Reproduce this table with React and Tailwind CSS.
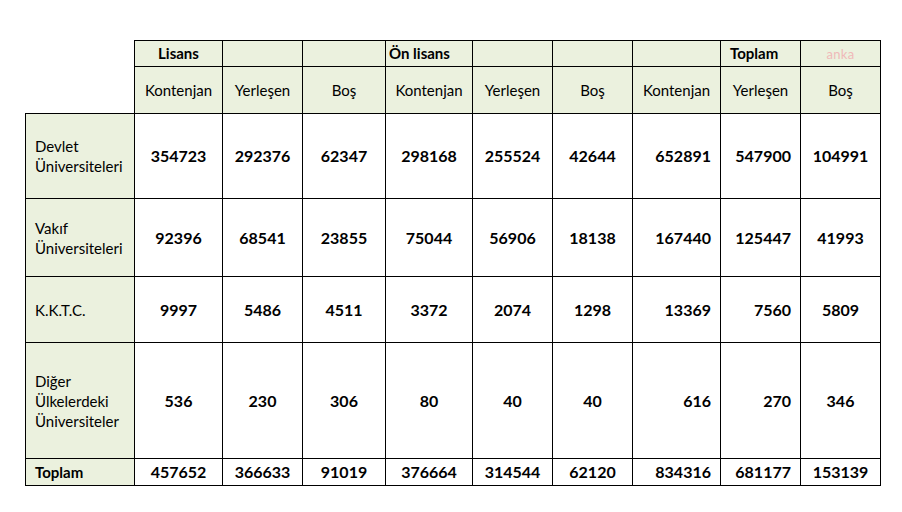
import React from 'react';

const cols = [109, 88, 80, 83, 87, 80, 80, 88, 80, 80];

const rows = [
  { label: ['Devlet', 'Üniversiteleri'], h: 'h-[85px]', values: [354723, 292376, 62347, 298168, 255524, 42644, 652891, 547900, 104991] },
  { label: ['Vakıf', 'Üniversiteleri'], h: 'h-[78px]', values: [92396, 68541, 23855, 75044, 56906, 18138, 167440, 125447, 41993] },
  { label: ['K.K.T.C.'], h: 'h-[66px]', values: [9997, 5486, 4511, 3372, 2074, 1298, 13369, 7560, 5809] },
  { label: ['Diğer', 'Ülkelerdeki', 'Üniversiteler'], h: 'h-[116px]', values: [536, 230, 306, 80, 40, 40, 616, 270, 346] },
];

const totals = [457652, 366633, 91019, 376664, 314544, 62120, 834316, 681177, 153139];

// Toplam Kontenjan and Toplam Yerleşen sit to the right, the rest are centred
const align = (i) => (i === 6 || i === 7 ? 'text-right pr-[9px]' : 'text-center');

const cell = 'border border-black p-0 align-middle';

export default function App() {
  return (
    <div className="w-[902px] h-[512px] bg-white pt-[40px] pl-[25px] text-black" style={{ fontFamily: 'Lato, "Liberation Sans", sans-serif' }}>
      <table className="table-fixed border-collapse w-[856px]">
        <colgroup>
          {cols.map((w, i) => (
            <col key={i} style={{ width: w }} />
          ))}
        </colgroup>
        <thead>
          <tr className="h-[26px] text-[15px] font-bold leading-none">
            <th className="p-0" />
            <th className={`${cell} bg-[#ebf1de] text-center`}>Lisans</th>
            <th className={`${cell} bg-[#ebf1de]`} />
            <th className={`${cell} bg-[#ebf1de]`} />
            <th className={`${cell} bg-[#ebf1de] text-left pl-[3px]`}>Ön lisans</th>
            <th className={`${cell} bg-[#ebf1de]`} />
            <th className={`${cell} bg-[#ebf1de]`} />
            <th className={`${cell} bg-[#ebf1de]`} />
            <th className={`${cell} bg-[#ebf1de] text-left pl-[9px]`}>Toplam</th>
            <th className={`${cell} bg-[#ebf1de] text-center`}>
              <span className="text-[13px] font-normal text-[#f0b9b9] tracking-wide">anka</span>
            </th>
          </tr>
          <tr className="h-[47px] text-[15px] font-normal">
            <th className="p-0" />
            {['Kontenjan', 'Yerleşen', 'Boş', 'Kontenjan', 'Yerleşen', 'Boş', 'Kontenjan', 'Yerleşen', 'Boş'].map((t, i) => (
              <th key={i} className={`${cell} bg-[#ebf1de] font-normal text-center`}>
                {t}
              </th>
            ))}
          </tr>
        </thead>
        <tbody>
          {rows.map((r) => (
            <tr key={r.label.join(' ')} className={r.h}>
              <td className={`${cell} bg-[#ebf1de] pl-[9px] text-[15px] leading-[20px]`}>
                {r.label.map((l) => (
                  <div key={l}>{l}</div>
                ))}
              </td>
              {r.values.map((v, i) => (
                <td key={i} className={`${cell} ${align(i)} text-[16px] font-bold`}>
                  {v}
                </td>
              ))}
            </tr>
          ))}
          <tr className="h-[27px]">
            <td className={`${cell} bg-[#ebf1de] pl-[9px] text-[15px] font-bold`}>Toplam</td>
            {totals.map((v, i) => (
              <td key={i} className={`${cell} ${align(i)} text-[16px] font-bold`}>
                {v}
              </td>
            ))}
          </tr>
        </tbody>
      </table>
    </div>
  );
}
